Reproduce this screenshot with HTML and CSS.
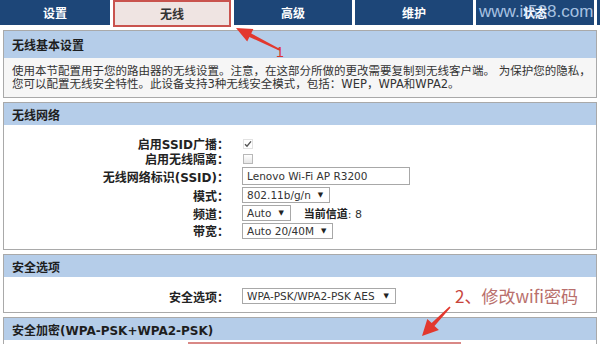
FILE: index.html
```html
<!DOCTYPE html>
<html>
<head>
	<meta charset="utf-8">
	<title>无线设置</title>
	<link rel="stylesheet" href="styles.css">
</head>
<body>
	<div class="nav">
		<div class="tab first">设置</div>
		<div class="tab active">无线</div>
		<div class="tab">高级</div>
		<div class="tab">维护</div>
		<div class="tab">状态</div>
		<div class="tab"></div>
	</div>

	<div class="panels">
		<div class="sec">
			<div class="sec-head tall">无线基本设置</div>
			<div class="intro">
				使用本节配置用于您的路由器的无线设置。注意，在这部分所做的更改需要复制到无线客户端。 为保护您的隐私，<br>
				您可以配置无线安全特性。此设备支持3种无线安全模式，包括：WEP，WPA和WPA2。
			</div>
		</div>

		<div class="sec">
			<div class="sec-head">无线网络</div>
			<div class="form">
				<div class="lbl">启用SSID广播：</div>
				<div class="cell"><span class="check on"><svg width="8" height="8" viewBox="0 0 8 8"><path d="M1 4.2 L3 6.2 L7 1.4" fill="none" stroke="#555" stroke-width="1.4"/></svg></span></div>

				<div class="lbl">启用无线隔离：</div>
				<div class="cell"><span class="check"></span></div>

				<div class="lbl">无线网络标识(SSID)：</div>
				<div class="cell"><input class="text" type="text" value="Lenovo Wi-Fi AP R3200"></div>

				<div class="lbl">模式：</div>
				<div class="cell"><span class="sel">802.11b/g/n<i>▼</i></span></div>

				<div class="lbl">频道：</div>
				<div class="cell"><span class="sel">Auto<i>▼</i></span><span class="cur"><b>当前信道</b>: 8</span></div>

				<div class="lbl">带宽：</div>
				<div class="cell"><span class="sel">Auto 20/40M<i>▼</i></span></div>
			</div>
		</div>

		<div class="sec">
			<div class="sec-head">安全选项</div>
			<div class="form single">
				<div class="lbl">安全选项：</div>
				<div class="cell"><span class="sel wide">WPA-PSK/WPA2-PSK AES<i>▼</i></span></div>
			</div>
		</div>

		<div class="sec">
			<div class="sec-head">安全加密(WPA-PSK+WPA2-PSK)</div>
			<div class="pwd-row"><div class="pwd-mark"></div></div>
		</div>
	</div>

	<!-- annotations drawn over the screenshot -->
	<div class="wm">www.it528.com</div>
	<svg class="arrows" width="600" height="344" viewBox="0 0 600 344">
		<polygon points="236,28 253.4,28.9 251.2,33.4 280.4,49.3 279.6,50.7 249.4,37 247.2,41.5" fill="#e2382e"/>
		<polygon points="422,336 427.3,318.9 431.7,323.1 449.4,306.4 450.6,307.6 434.5,325.9 438.9,330.1" fill="#e2382e"/>
	</svg>
	<div class="note one">1</div>
	<div class="note two"><span>2、</span>修改wifi密码</div>
</body>
</html>
```

FILE: styles.css
```css
body {
	margin: 0;
	width: 600px;
	height: 344px;
	overflow: hidden;
	position: relative;
	background: #fff;
	color: #222;
	font-family: "DejaVu Sans", "Noto Sans CJK SC", sans-serif;
	font-size: 12px;
}

.nav {
	display: flex;
	gap: 3px;
	height: 25px;
}
.tab {
	flex: 0 0 118px;
	background: #1d4678;
	color: #fff;
	font-family: "Noto Sans CJK SC", sans-serif;
	font-weight: bold;
	font-size: 12px;
	display: flex;
	align-items: center;
	justify-content: center;
}
.tab.first {
	flex-basis: 110px;
}
.tab.active {
	height: 27px;
	box-sizing: border-box;
	background: #efe4e2;
	color: #333;
	border: 2px solid #c9534e;
}

.panels {
	display: flex;
	flex-direction: column;
	gap: 4px;
	padding: 5px 3px 0;
}
.sec {
	border: 1px solid #a9a9a9;
	background: #fff;
}
.sec-head {
	height: 22px;
	background: #b5cde9;
	display: flex;
	align-items: center;
	padding-left: 8px;
	font-weight: bold;
	color: #1e1e1e;
}
.sec-head.tall {
	height: 27px;
}
.intro {
	background: #f6f6f6;
	padding: 7px 8px 6px;
	font-size: 11.5px;
	line-height: 13px;
	color: #333;
	white-space: nowrap;
}

.form {
	display: grid;
	grid-template-columns: 225px auto;
	grid-template-rows: 15px 15px 20px 18px 18px 17px;
	column-gap: 13px;
	align-items: center;
	padding: 11px 0 10px;
}
.form.single {
	grid-template-rows: 16px;
	padding: 11px 0 8px;
}
.lbl {
	text-align: right;
	font-weight: bold;
	white-space: nowrap;
}
.cell {
	display: flex;
	align-items: center;
}

.check {
	width: 10px;
	height: 10px;
	box-sizing: border-box;
	margin-left: 1px;
	border: 1px solid #b8b8b8;
	background: linear-gradient(#fff, #e6e6e6);
	display: flex;
	align-items: center;
	justify-content: center;
}
.check.on {
	border-color: #e2e2e2;
	background: #fff;
}

.text {
	width: 168px;
	height: 18px;
	box-sizing: border-box;
	border: 1px solid #a8a8a8;
	padding: 0 4px;
	font-family: "DejaVu Sans", sans-serif;
	font-size: 10.5px;
	color: #333;
	margin: 0;
}
.sel {
	height: 16px;
	box-sizing: border-box;
	border: 1px solid #a8a8a8;
	padding: 0 6px 0 4px;
	display: inline-flex;
	align-items: center;
	gap: 7px;
	font-size: 10.5px;
	color: #333;
	background: #fff;
}
.sel i {
	font-style: normal;
	font-size: 7px;
	color: #222;
}
.sel.wide {
	gap: 9px;
}
.cur {
	margin-left: 13px;
	font-size: 11px;
	color: #333;
}
.cur b {
	color: #222;
}

.pwd-row {
	height: 10px;
	padding: 2px 0 0 184px;
}
.pwd-mark {
	width: 269px;
	height: 14px;
	border: 2px solid #d98886;
	background: #fbecec;
}

.wm {
	position: absolute;
	left: 479px;
	top: 2px;
	font-family: "Liberation Sans", sans-serif;
	font-size: 17px;
	color: rgba(205, 226, 255, 0.8);
	pointer-events: none;
}
.arrows {
	position: absolute;
	left: 0;
	top: 0;
	pointer-events: none;
}
.note {
	position: absolute;
	pointer-events: none;
	color: #d9362c;
}
.note.one {
	left: 276px;
	top: 44px;
	font-family: "Liberation Sans", sans-serif;
	font-size: 14px;
}
.note.two {
	left: 455px;
	top: 283px;
	font-family: "Noto Sans CJK SC", sans-serif;
	font-size: 17px;
	color: #b96f6c;
}
.note.two span {
	color: #c8453c;
}
```
